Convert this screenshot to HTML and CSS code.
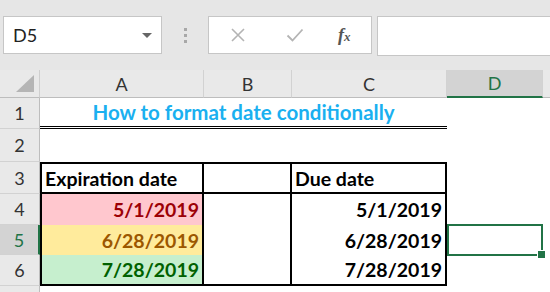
FILE: index.html
```html
<!DOCTYPE html>
<html lang="en">
<head>
  <meta charset="UTF-8">
  <meta name="viewport" content="width=device-width, initial-scale=1.0">
  <title>How to format date conditionally</title>
  <link rel="stylesheet" href="styles.css">
</head>
<body>
  <!-- Name box and formula bar -->
  <div class="toolbar">
    <div class="namebox">
      <span>D5</span>
      <span class="caret"></span>
    </div>
    <div class="dots"><i></i><i></i><i></i></div>
    <div class="fbuttons">
      <svg class="icon" width="16" height="16" viewBox="0 0 16 16"><path d="M2 2L14 14M14 2L2 14" stroke="#b4b4b4" stroke-width="1.6" fill="none"/></svg>
      <svg class="icon" width="18" height="16" viewBox="0 0 18 16"><path d="M1.5 8.5L6.5 13.5L16.5 2.5" stroke="#b4b4b4" stroke-width="1.8" fill="none"/></svg>
      <span class="fx">f<span class="fx-x">x</span></span>
    </div>
    <div class="fbar"></div>
  </div>

  <!-- Worksheet grid -->
  <div class="sheet">
    <div class="corner"><span class="tri"></span></div>
    <div class="colhead">A</div>
    <div class="colhead">B</div>
    <div class="colhead">C</div>
    <div class="colhead selected">D</div>
    <div class="colhead rest"></div>

    <div class="rowhead">1</div>
    <div class="cell title">How to format date conditionally</div>
    <div class="cell"></div>
    <div class="cell"></div>

    <div class="rowhead">2</div>
    <div class="cell"></div>
    <div class="cell"></div>
    <div class="cell"></div>
    <div class="cell"></div>
    <div class="cell"></div>

    <div class="rowhead">3</div>
    <div class="cell bold head first">Expiration date</div>
    <div class="cell head"></div>
    <div class="cell bold head">Due date</div>
    <div class="cell"></div>
    <div class="cell"></div>

    <div class="rowhead">4</div>
    <div class="cell bold num first bad">5/1/2019</div>
    <div class="cell side"></div>
    <div class="cell bold num side">5/1/2019</div>
    <div class="cell"></div>
    <div class="cell"></div>

    <div class="rowhead selected">5</div>
    <div class="cell bold num first neutral">6/28/2019</div>
    <div class="cell side"></div>
    <div class="cell bold num side">6/28/2019</div>
    <div class="cell active"><span class="handle"></span></div>
    <div class="cell"></div>

    <div class="rowhead">6</div>
    <div class="cell bold num first good last">7/28/2019</div>
    <div class="cell side last"></div>
    <div class="cell bold num side last">7/28/2019</div>
    <div class="cell"></div>
    <div class="cell"></div>

    <div class="rowhead"></div>
    <div class="cell"></div>
    <div class="cell"></div>
    <div class="cell"></div>
    <div class="cell"></div>
    <div class="cell"></div>
  </div>
</body>
</html>
```

FILE: styles.css
```css
body {
  margin: 0;
  width: 550px;
  height: 292px;
  overflow: hidden;
  font-family: Lato, "Open Sans", sans-serif;
  background: #fff;
}
.toolbar {
  display: flex;
  height: 70px;
  padding-top: 16px;
  box-sizing: border-box;
  background: #e6e6e6;
}
.namebox {
  display: flex;
  align-items: center;
  justify-content: space-between;
  width: 159px;
  height: 38px;
  margin-left: 3px;
  padding: 0 9px 0 9px;
  box-sizing: border-box;
  background: #fff;
  border: 1px solid #c6c6c6;
  color: #222;
  font-size: 18px;
}
.caret {
  width: 0;
  height: 0;
  border-left: 5px solid transparent;
  border-right: 5px solid transparent;
  border-top: 5px solid #666;
}
.dots {
  display: flex;
  flex-direction: column;
  align-items: center;
  justify-content: center;
  gap: 3px;
  width: 46px;
  height: 38px;
}
.dots i {
  width: 3px;
  height: 3px;
  background: #a8a8a8;
}
.fbuttons {
  display: flex;
  align-items: center;
  width: 164px;
  height: 38px;
  padding-left: 21px;
  box-sizing: border-box;
  gap: 40px;
  background: #fff;
  border: 1px solid #c6c6c6;
}
.fx {
  font-family: "Liberation Serif", serif;
  font-style: italic;
  font-weight: bold;
  font-size: 18px;
  color: #555;
  margin-left: -6px;
}
.fx-x {
  font-size: 13px;
}
.fbar {
  flex: 1;
  height: 38px;
  margin-left: 5px;
  margin-right: -2px;
  background: #fff;
  border: 1px solid #c6c6c6;
}
.sheet {
  display: grid;
  grid-template-columns: 40px 164px 88px 155px 96px 1fr;
  grid-template-rows: 28px 31px 33px 32px 31px 30px 31px 10px;
}
.sheet > div {
  box-sizing: border-box;
  position: relative;
}
.corner {
  background: #e9e9e9;
  border-right: 1px solid #cfcfcf;
  border-bottom: 1px solid #bdbdbd;
}
.tri {
  position: absolute;
  right: 5px;
  bottom: 5px;
  width: 0;
  height: 0;
  border-left: 18px solid transparent;
  border-bottom: 17px solid #b5b5b5;
}
.colhead {
  display: flex;
  align-items: center;
  justify-content: center;
  background: #e9e9e9;
  border-right: 1px solid #d2d2d2;
  border-bottom: 1px solid #bdbdbd;
  color: #333;
  font-size: 18px;
}
.colhead.selected {
  background: #d3d3d3;
  color: #217346;
  border-bottom: 2px solid #217346;
}
.colhead.rest {
  border-right: none;
}
.rowhead {
  display: flex;
  align-items: center;
  justify-content: center;
  background: #e9e9e9;
  border-bottom: 1px solid #d2d2d2;
  border-right: 1px solid #bdbdbd;
  color: #333;
  font-size: 18px;
}
.rowhead.selected {
  background: #d3d3d3;
  color: #217346;
  border-right: 2px solid #217346;
}
.cell {
  display: flex;
  align-items: center;
  padding: 0 3px;
  font-size: 19.5px;
  color: #000;
}
.title {
  grid-column: span 3;
  justify-content: center;
  border-bottom: 3px double #000;
  color: #1ab0f0;
  font-weight: bold;
  font-size: 20.5px;
}
.bold {
  font-weight: bold;
}
.head {
  border-top: 2px solid #000;
  border-bottom: 2px solid #000;
  border-right: 2px solid #000;
}
.first {
  border-left: 2px solid #000;
  border-right: 2px solid #000;
}
.side {
  border-right: 2px solid #000;
}
.last {
  border-bottom: 2px solid #000;
}
.num {
  justify-content: flex-end;
}
.bad {
  background: #ffc7ce;
  color: #9c0006;
}
.neutral {
  background: #ffeb9c;
  color: #9c5700;
}
.good {
  background: #c6efce;
  color: #006100;
}
.active {
  border: 2px solid #217346;
  margin-top: -1px;
  margin-bottom: -1px;
}
.handle {
  position: absolute;
  right: -5px;
  bottom: -5px;
  width: 7px;
  height: 7px;
  background: #217346;
  border: 1px solid #fff;
}
```
